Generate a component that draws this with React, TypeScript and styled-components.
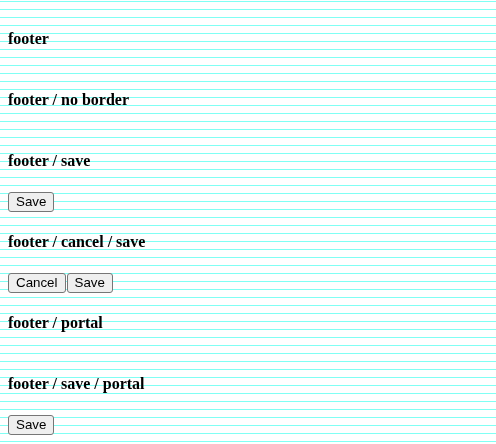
import React from "react";
import styled, { createGlobalStyle } from "styled-components";

const Global = createGlobalStyle`
  html {
    background: #ffffff;
    min-height: 100%;
  }
  body {
    margin: 9px 8px 8px;
    font-family: "Liberation Serif", "Times New Roman", serif;
    background: transparent;
  }
`;

const Lines = styled.div`
  position: fixed;
  inset: 0;
  z-index: -1;
  background-image: repeating-linear-gradient(
    to bottom,
    transparent 0px 1px,
    #80fff4 1px 2px,
    transparent 2px 8px
  );
`;

const Page = styled.div`
  display: flex;
  flex-direction: column;
`;

const Section = styled.section`
  display: flow-root;
`;

const Title = styled.h4`
  margin: 21.28px 0;
  font-size: 16px;
  font-weight: bold;
  line-height: 18.4px;
  color: #000;
`;

const Footer = styled.footer`
  display: flex;
  gap: 1px;
`;

const Button = styled.button`
  font-family: "Liberation Sans", Arial, sans-serif;
  font-size: 13.333px;
  line-height: 16px;
  padding: 1px 7px;
  margin: 0;
  border: 1px solid #767676;
  border-radius: 3px;
  background: #efefef;
  color: #000;
`;

const sections: { title: string; buttons: string[] }[] = [
  { title: "footer", buttons: [] },
  { title: "footer / no border", buttons: [] },
  { title: "footer / save", buttons: ["Save"] },
  { title: "footer / cancel / save", buttons: ["Cancel", "Save"] },
  { title: "footer / portal", buttons: [] },
  { title: "footer / save / portal", buttons: ["Save"] },
];

export default function App() {
  return (
    <>
      <Global />
      <Lines />
      <Page>
        {sections.map((s) => (
          <Section key={s.title}>
            <Title>{s.title}</Title>
            {s.buttons.length > 0 && (
              <Footer>
                {s.buttons.map((b) => (
                  <Button key={b}>{b}</Button>
                ))}
              </Footer>
            )}
          </Section>
        ))}
      </Page>
    </>
  );
}
